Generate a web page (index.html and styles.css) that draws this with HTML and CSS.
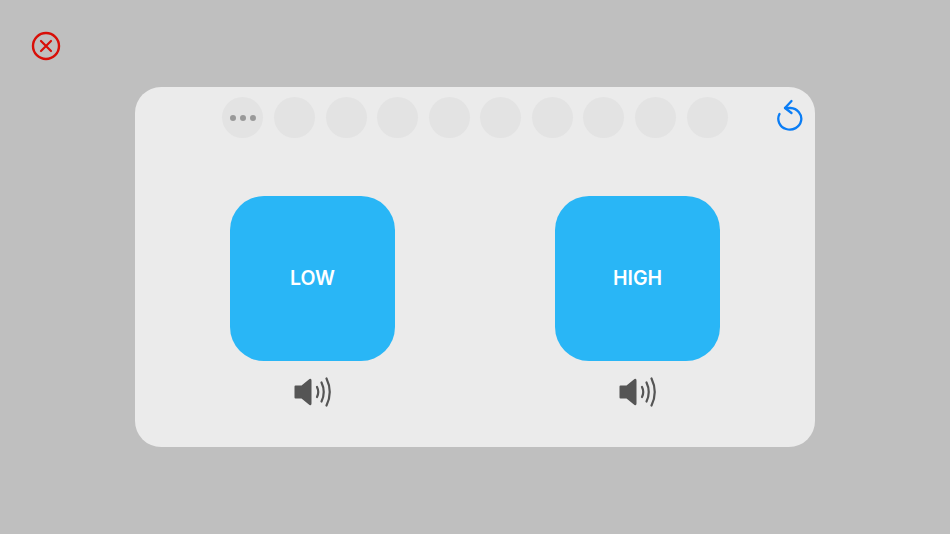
FILE: index.html
```html
<!DOCTYPE html>
<html lang="en">
<head>
    <meta charset="UTF-8">
    <meta name="viewport" content="width=device-width, initial-scale=1.0">
    <title>Low or High</title>
    <link rel="stylesheet" href="styles.css">
</head>
<body>
    <button class="close-button" aria-label="Close">
        <svg width="30" height="30" viewBox="0 0 30 30" fill="none" stroke="#d80f08" stroke-width="2.4" stroke-linecap="round">
            <circle cx="15" cy="15" r="13"/>
            <path d="M10 10 L20 20 M20 10 L10 20" stroke-width="2.2"/>
        </svg>
    </button>

    <div class="game-card">
        <button class="reset-button" aria-label="Start over">
            <svg width="28" height="34" viewBox="0 0 28 34" fill="none" stroke="#0a7df5" stroke-width="2.3" stroke-linecap="round" stroke-linejoin="round">
                <path d="M9 10 H14.5 A11.5 10.8 0 1 1 3.5 16"/>
                <path d="M15.5 3 L9 10 L15.5 15"/>
            </svg>
        </button>

        <div class="progress-row">
            <div class="progress-dot current">
                <span></span><span></span><span></span>
            </div>
            <div class="progress-dot"></div>
            <div class="progress-dot"></div>
            <div class="progress-dot"></div>
            <div class="progress-dot"></div>
            <div class="progress-dot"></div>
            <div class="progress-dot"></div>
            <div class="progress-dot"></div>
            <div class="progress-dot"></div>
            <div class="progress-dot"></div>
        </div>

        <div class="answer-row">
            <div class="answer">
                <button class="answer-button">LOW</button>
                <svg class="speaker" width="38" height="30" viewBox="0 0 38 30" fill="none" stroke="#555" stroke-width="2.2" stroke-linecap="round">
                    <path d="M1.5 8.5 H7.5 L15.5 2 Q17.5 1 17.5 3.5 V26.5 Q17.5 29 15.5 28 L7.5 21.5 H1.5 Q0.5 21.5 0.5 20.5 V9.5 Q0.5 8.5 1.5 8.5 Z" fill="#555" stroke="none"/>
                    <path d="M23 10 Q25.5 15 23 20"/>
                    <path d="M27.5 5.5 Q32 15 27.5 24.5"/>
                    <path d="M32.5 1.5 Q39 15 32.5 28.5"/>
                </svg>
            </div>
            <div class="answer">
                <button class="answer-button">HIGH</button>
                <svg class="speaker" width="38" height="30" viewBox="0 0 38 30" fill="none" stroke="#555" stroke-width="2.2" stroke-linecap="round">
                    <path d="M1.5 8.5 H7.5 L15.5 2 Q17.5 1 17.5 3.5 V26.5 Q17.5 29 15.5 28 L7.5 21.5 H1.5 Q0.5 21.5 0.5 20.5 V9.5 Q0.5 8.5 1.5 8.5 Z" fill="#555" stroke="none"/>
                    <path d="M23 10 Q25.5 15 23 20"/>
                    <path d="M27.5 5.5 Q32 15 27.5 24.5"/>
                    <path d="M32.5 1.5 Q39 15 32.5 28.5"/>
                </svg>
            </div>
        </div>
    </div>
</body>
</html>
```

FILE: styles.css
```css
* {
    margin: 0;
    padding: 0;
    box-sizing: border-box;
}

body {
    font-family: Inter, 'Liberation Sans', sans-serif;
    background: #bfbfbf;
    height: 100vh;
    overflow: hidden;
    display: flex;
    align-items: center;
    justify-content: center;
}

button {
    border: none;
    background: none;
    font-family: inherit;
    cursor: pointer;
}

.close-button {
    position: absolute;
    left: 31px;
    top: 31px;
    width: 30px;
    height: 30px;
    display: flex;
}

.game-card {
    position: relative;
    width: 680px;
    height: 360px;
    padding-top: 10px;
    background: #ebebeb;
    border-radius: 26px;
    display: flex;
    flex-direction: column;
    align-items: center;
}

.reset-button {
    position: absolute;
    top: 11px;
    right: 11px;
    width: 28px;
    height: 34px;
    display: flex;
}

.progress-row {
    display: flex;
    gap: 10.6px;
}

.progress-dot {
    width: 41px;
    height: 41px;
    border-radius: 50%;
    background: #e3e3e3;
    display: flex;
    align-items: center;
    justify-content: center;
    gap: 4px;
}

.progress-dot span {
    width: 6px;
    height: 6px;
    border-radius: 50%;
    background: #999;
}

.answer-row {
    display: flex;
    gap: 160px;
    margin-top: 58px;
}

.answer {
    display: flex;
    flex-direction: column;
    align-items: center;
    gap: 16px;
}

.answer-button {
    width: 165px;
    height: 165px;
    padding-bottom: 1px;
    border-radius: 34px;
    background: #29b6f6;
    color: white;
    font-size: 19.5px;
    font-weight: 600;
}
```
